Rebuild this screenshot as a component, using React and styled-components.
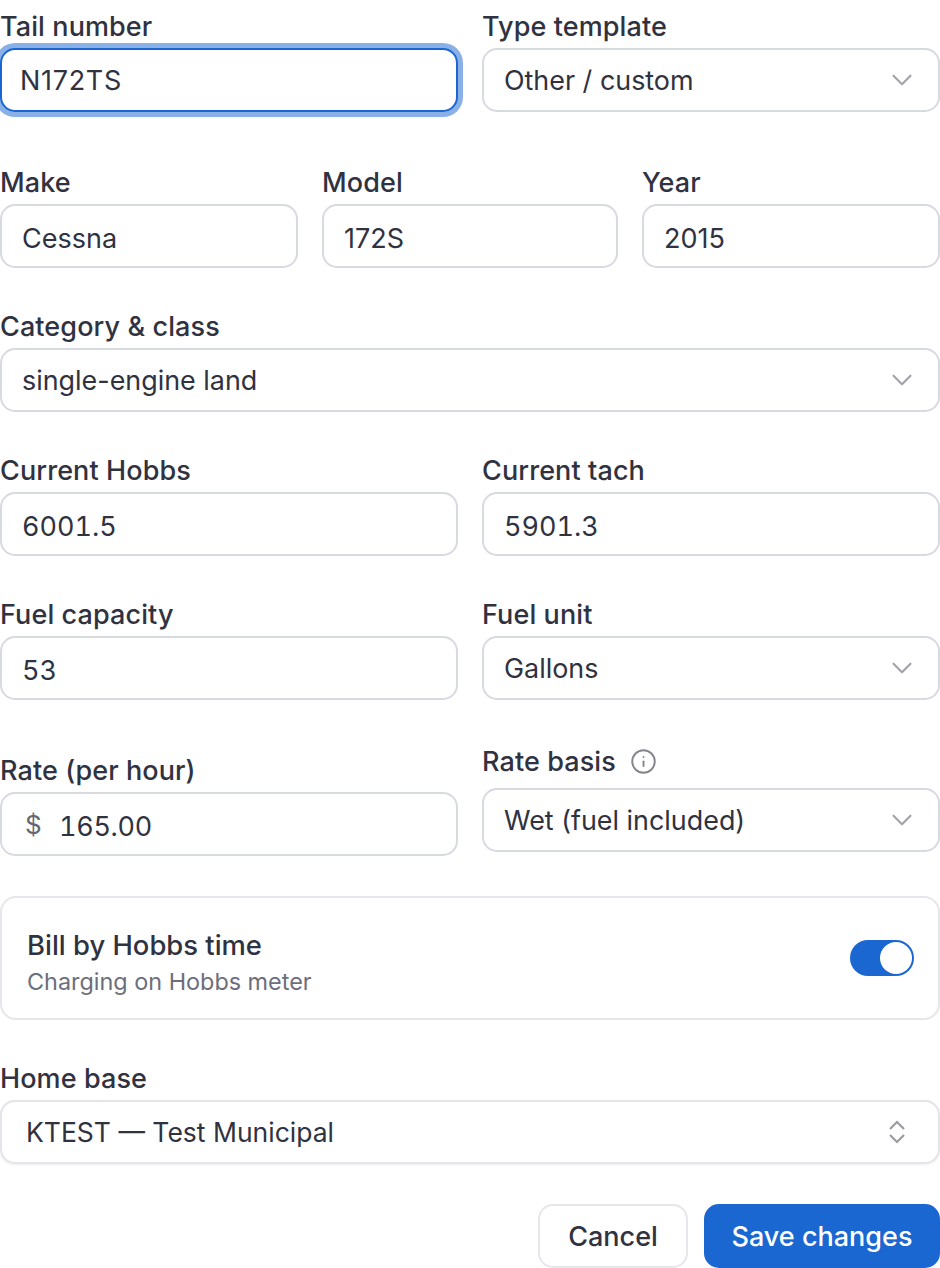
import React from 'react';
import styled, { createGlobalStyle } from 'styled-components';
import { ChevronDown, Info } from 'lucide-react';

const GlobalStyle = createGlobalStyle`
    * { box-sizing:border-box; }
    html, body {
        margin:0;
        padding:0;
        background:#fff;
    }
    body {
        font-family:Inter, "Liberation Sans", sans-serif;
        color:#30323f;
    }
`
const Form = styled.form`
    width:940px;
    height:1268px;
    overflow:hidden;
    padding-top:10px;
    display:flex;
    flex-direction:column;
`
const Row = styled.div`
    display:grid;
    grid-template-columns:${props => props.$columns || '1fr 1fr'};
    gap:24px;
    margin-top:${props => props.$top || 0}px;
`
const Field = styled.div`
    display:flex;
    flex-direction:column;
    min-width:0;
    padding-top:${props => props.$pad || 0}px;
`
const Label = styled.label`
    display:flex;
    align-items:center;
    gap:14px;
    height:32px;
    margin-bottom:${props => props.$gap || 6}px;
    font-size:27px;
    font-weight:450;
    letter-spacing:0.1px;
`
const Input = styled.input`
    display:block;
    width:100%;
    height:64px;
    padding:4px 20px 0;
    border:2px solid #d8dae2;
    border-radius:15px;
    background:#fff;
    color:#30323f;
    font-family:inherit;
    font-size:27px;
    font-variant-numeric:${props => props.$numeric ? 'tabular-nums' : 'normal'};
    outline:none;
    &.focused {
        padding:0 18px;
        border-color:#1a67d2;
        box-shadow:0 0 0 5px #8ab0e8;
        letter-spacing:0.7px;
    }
`
const MoneyBox = styled.div`
    display:flex;
    align-items:center;
    height:64px;
    padding:0 20px 0 23px;
    border:2px solid #d8dae2;
    border-radius:15px;
`
const Prefix = styled.span`
    width:34px;
    color:#676875;
    font-size:26px;
`
const MoneyInput = styled.input`
    flex:1;
    min-width:0;
    border:0;
    padding:4px 0 0;
    outline:none;
    color:#30323f;
    font-family:inherit;
    font-size:27px;
    font-variant-numeric:tabular-nums;
    letter-spacing:-0.3px;
`
const Select = styled.div`
    display:flex;
    align-items:center;
    justify-content:space-between;
    height:64px;
    padding:0 ${props => props.$plain ? 32 : 19}px 0 ${props => props.$plain ? 24 : 20}px;
    border:2px solid ${props => props.$plain ? '#e4e4ea' : '#d8dae2'};
    border-radius:15px;
    background:#fff;
    font-size:${props => props.$plain ? 26.5 : 26.9}px;
    box-shadow:${props => props.$plain ? '0 1px 3px rgba(30,30,50,0.08)' : 'none'};
    svg {
        flex:none;
    }
`
const Card = styled.div`
    display:flex;
    align-items:center;
    justify-content:space-between;
    height:124px;
    margin-top:40px;
    padding:0 24px 0 25px;
    border:2px solid #e6e6eb;
    border-radius:16px;
`
const CardText = styled.div`
    padding-top:8px;
`
const CardTitle = styled.div`
    font-size:27.4px;
    font-weight:450;
    line-height:36px;
`
const CardHint = styled.div`
    margin-top:3px;
    color:#6c6e7b;
    font-size:23.4px;
    line-height:32px;
`
const Toggle = styled.div`
    display:flex;
    align-items:center;
    justify-content:flex-end;
    width:64px;
    height:36px;
    padding:0 2px;
    border-radius:18px;
    background:#1a67d2;
`
const Knob = styled.span`
    width:32px;
    height:32px;
    border-radius:50%;
    background:#fff;
`
const Actions = styled.div`
    display:flex;
    justify-content:flex-end;
    gap:16px;
    margin-top:40px;
`
const Button = styled.button`
    width:${props => props.$primary ? 236 : 150}px;
    height:64px;
    padding:0;
    border:${props => props.$primary ? '0' : '2px solid #e6e6eb'};
    border-radius:15px;
    background:${props => props.$primary ? '#1a67d2' : '#fff'};
    color:${props => props.$primary ? '#fff' : '#30323f'};
    font-family:inherit;
    font-size:27px;
    font-weight:450;
`

const Chevron = () => <ChevronDown size={34} color="#a3a3ab" strokeWidth={1.5} />

const UpDown = () => (
    <svg width="18" height="26" viewBox="0 0 18 26" fill="none" stroke="#9b9ba2" strokeWidth="2.2">
        <path d="M2 10 L9 3 L16 10" />
        <path d="M2 16 L9 23 L16 16" />
    </svg>
)

const App = () => {
    return (
        <>
        <GlobalStyle />
        <Form>
            <Row>
                <Field>
                    <Label>Tail number</Label>
                    <Input className="focused" defaultValue="N172TS" />
                </Field>
                <Field>
                    <Label>Type template</Label>
                    <Select>Other / custom<Chevron /></Select>
                </Field>
            </Row>
            <Row $columns="298px 296px 298px" $top={54}>
                <Field>
                    <Label>Make</Label>
                    <Input defaultValue="Cessna" />
                </Field>
                <Field>
                    <Label>Model</Label>
                    <Input defaultValue="172S" />
                </Field>
                <Field>
                    <Label>Year</Label>
                    <Input defaultValue="2015" />
                </Field>
            </Row>
            <Row $columns="1fr" $top={42}>
                <Field>
                    <Label>Category &amp; class</Label>
                    <Select>single-engine land<Chevron /></Select>
                </Field>
            </Row>
            <Row $top={42}>
                <Field>
                    <Label>Current Hobbs</Label>
                    <Input $numeric defaultValue="6001.5" />
                </Field>
                <Field>
                    <Label>Current tach</Label>
                    <Input $numeric defaultValue="5901.3" />
                </Field>
            </Row>
            <Row $top={42}>
                <Field>
                    <Label>Fuel capacity</Label>
                    <Input $numeric defaultValue="53" />
                </Field>
                <Field>
                    <Label>Fuel unit</Label>
                    <Select>Gallons<Chevron /></Select>
                </Field>
            </Row>
            <Row $top={45}>
                <Field $pad={9}>
                    <Label>Rate (per hour)</Label>
                    <MoneyBox>
                        <Prefix>$</Prefix>
                        <MoneyInput defaultValue="165.00" />
                    </MoneyBox>
                </Field>
                <Field>
                    <Label $gap={11}>Rate basis <Info size={27} color="#85858d" strokeWidth={1.7} /></Label>
                    <Select>Wet (fuel included)<Chevron /></Select>
                </Field>
            </Row>
            <Card>
                <CardText>
                    <CardTitle>Bill by Hobbs time</CardTitle>
                    <CardHint>Charging on Hobbs meter</CardHint>
                </CardText>
                <Toggle><Knob /></Toggle>
            </Card>
            <Row $columns="1fr" $top={42}>
                <Field>
                    <Label>Home base</Label>
                    <Select $plain>KTEST — Test Municipal<UpDown /></Select>
                </Field>
            </Row>
            <Actions>
                <Button type="button">Cancel</Button>
                <Button type="button" $primary>Save changes</Button>
            </Actions>
        </Form>
        </>
    )
}
export default App;
